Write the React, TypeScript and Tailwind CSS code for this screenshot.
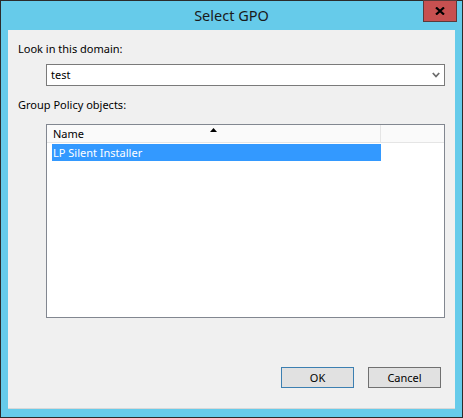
import React from "react";

const font = { fontFamily: '"Segoe UI", "Noto Sans", "Liberation Sans", sans-serif' };

function Chevron() {
  return (
    <svg width="8" height="6" viewBox="0 0 8 6" className="block">
      <polyline points="0.8,1 4,4.5 7.2,1" fill="none" stroke="#6d6d6d" strokeWidth="1.8" />
    </svg>
  );
}

function SortArrow() {
  return (
    <svg width="7" height="4" viewBox="0 0 7 4" className="block">
      <polygon points="3.5,0 7,4 0,4" fill="#000" />
    </svg>
  );
}

export default function App() {
  return (
    <div
      style={font}
      className="w-[463px] h-[418px] bg-[#66cbea] border border-[#2b2b2b] flex flex-col text-[11px] text-black"
    >
      {/* title bar */}
      <div className="relative h-[28px] shrink-0 flex items-center justify-center">
        <span className="text-[14.5px] leading-none text-[#1a1a1a] pt-[1px]">Select GPO</span>
        <button className="absolute right-[5px] -top-[1px] w-[34px] h-[22px] bg-[#c75050] border border-[#5a3a3a] flex items-center justify-center">
          <svg width="10" height="8" viewBox="0 0 10 8">
            <path d="M1 0.5 L9 7.5 M9 0.5 L1 7.5" stroke="#000" strokeWidth="2.2" />
          </svg>
        </button>
      </div>

      {/* client area */}
      <div className="mx-[7px] mt-[1px] h-[379px] bg-[#f0f0f0] border-b border-[#d8d8d8] flex flex-col">
        <div className="pl-[10px] mt-[12px] leading-[14px]">Look in this domain:</div>

        <div className="ml-[38px] mt-[8px] w-[399px] h-[22px] bg-white border border-[#7a7a7a] flex items-center justify-between pl-[4px] pr-[4px]">
          <span className="leading-[14px]">test</span>
          <Chevron />
        </div>

        <div className="pl-[10px] mt-[12px] leading-[14px]">Group Policy objects:</div>

        <div className="ml-[38px] mt-[12px] w-[399px] h-[194px] bg-white border border-[#828790] flex flex-col">
          <div className="flex h-[18px] border-b border-[#e5e5e5] bg-[#fafafa]">
            <div className="relative w-[334px] border-r border-[#e5e5e5] pl-[6px] flex items-center">
              <span className="leading-[14px]">Name</span>
              <div className="absolute left-[163px] top-[3px]">
                <SortArrow />
              </div>
            </div>
            <div className="flex-1" />
          </div>
          <div className="ml-[5px] mt-[1px] w-[329px] h-[17px] bg-[#3399ff] text-white flex items-center pl-[1px]">
            <span className="leading-[14px]">LP Silent Installer</span>
          </div>
        </div>

        <div className="mt-[49px] flex justify-end gap-[14px] pr-[14px]">
          <button className="w-[73px] h-[21px] bg-[#e1e1e1] border border-[#3c7fb1] leading-[14px]">OK</button>
          <button className="w-[73px] h-[21px] bg-[#e1e1e1] border border-[#707070] leading-[14px]">Cancel</button>
        </div>
      </div>
    </div>
  );
}
